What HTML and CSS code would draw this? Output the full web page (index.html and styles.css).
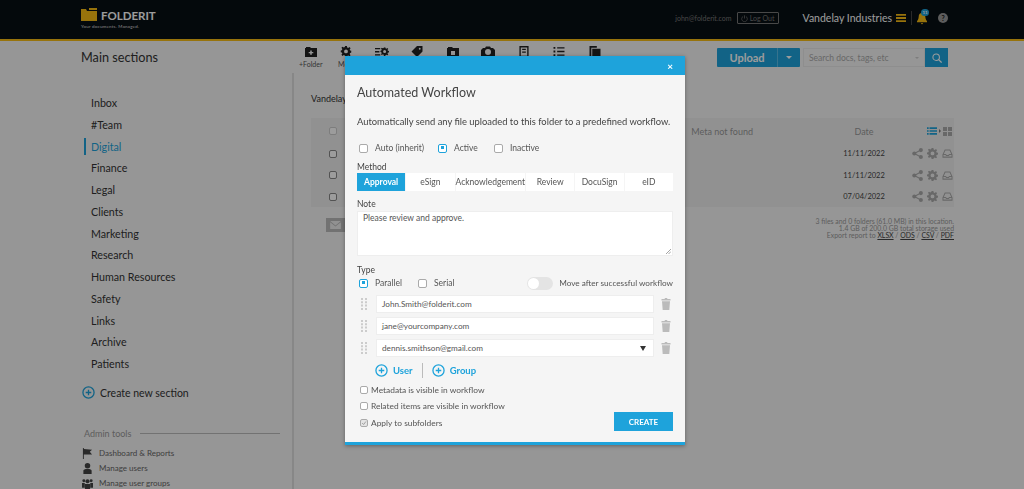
FILE: index.html
```html
<!DOCTYPE html>
<html>
<head>
    <meta charset="utf-8" />
    <title>Automated Workflow</title>
    <meta name="viewport" content="width=device-width, initial-scale=1">
    <link rel="stylesheet" href="styles.css">
</head>
<body>
    <svg class="defs" width="0" height="0">
        <symbol id="i-share" viewBox="0 0 12 12"><circle cx="2.5" cy="6" r="2.2"/><circle cx="9.7" cy="2.3" r="2.2"/><circle cx="9.7" cy="9.7" r="2.2"/><path d="M2.5 6 9.7 2.3M2.5 6l7.2 3.7" stroke="#aaa" stroke-width="1.2" fill="none"/></symbol>
        <symbol id="i-gear" viewBox="0 0 12 12"><path fill-rule="evenodd" d="M5 0h2l.3 1.600 1.100.5L9.800 1.200l1.200 1.200-1 1.300.5 1.200 1.500.3v2l-1.500.3-.5 1.200 1 1.300-1.200 1.200-1.400-.9-1.100.5L7 12H5l-.3-1.600-1.100-.5-1.400.9L1 9.600l1-1.300-.5-1.200L0 6.800v-2l1.500-.3.5-1.200-1-1.300 1.200-1.200 1.400.9 1.100-.5zM6 3.800a2 2 0 1 0 0 4.200 2 2 0 0 0 0-4.200z"/></symbol>
        <symbol id="i-tray" viewBox="0 0 12 12"><path d="M3 1.500h6L11.500 7v3.500H.5V7zM3.700 2.600 2 6.600h2.400l.6 1h2l.6-1H10L8.300 2.600zM1.600 7.700v1.700h8.800V7.700H8.200l-.6 1H4.400l-.6-1z" fill-rule="evenodd"/></symbol>
        <symbol id="i-plus" viewBox="0 0 14 14"><circle cx="7" cy="7" r="6" fill="none" stroke="currentColor" stroke-width="1.4"/><path d="M7 4v6M4 7h6" stroke="currentColor" stroke-width="1.4"/></symbol>
        <symbol id="i-trash" viewBox="0 0 10 12"><path d="M4 0h2l.5 1h3v1.400H.5V1h3zM1 3.200h8L8.300 12H1.700z"/></symbol>
        <symbol id="i-grip" viewBox="0 0 6 12"><path d="M0 0h2v2H0zM4 0h2v2H4zM0 3.300h2v2H0zM4 3.300h2v2H4zM0 6.600h2v2H0zM4 6.600h2v2H4zM0 10h2v2H0zM4 10h2v2H4z"/></symbol>
    </svg>

    <div class="page">
        <header class="topbar">
            <div class="brand">
                <div class="brand-row">
                    <svg class="brand-logo" viewBox="0 0 16 13"><path d="M0 1h5l1 2h10v10H0zM8 0h8v2H8z"/></svg>
                    <span class="brand-name">FOLDERIT</span>
                </div>
                <div class="brand-tag">Your documents. Managed.</div>
            </div>
            <div class="account">
                <span class="account-mail">john@folderit.com</span>
                <span class="logout">
                    <svg viewBox="0 0 10 10"><path d="M3 2a4 4 0 1 0 4 0M5 .5V5" fill="none" stroke="currentColor" stroke-width="1"/></svg>
                    Log Out
                </span>
                <span class="company">Vandelay Industries</span>
                <svg class="burger" viewBox="0 0 10 8"><path d="M0 0h10v1.800H0zM0 3.100h10v1.800H0zM0 6.200h10V8H0z"/></svg>
                <span class="top-sep"></span>
                <span class="bell">
                    <svg viewBox="0 0 10 12"><path d="M5 .5c2.300 0 3.300 1.700 3.300 3.800 0 2.500 1.700 4.400 1.700 4.400v1H0v-1s1.700-1.900 1.700-4.400C1.700 2.200 2.700.5 5 .5zM3.800 10.500h2.400L5 12z"/></svg>
                    <span class="bell-count">11</span>
                </span>
                <span class="help">?</span>
            </div>
        </header>

        <div class="toolbar">
            <h1 class="section-title">Main sections</h1>
            <div class="tools">
                <div class="tool">
                    <svg viewBox="0 0 12 11"><path fill-rule="evenodd" d="M0 2h1V1h4l1 1h6v9H0zM5.200 4.500V6H3.700v1.300h1.500v1.500h1.600V7.300h1.500V6H6.800V4.500z"/></svg>
                    <span>+Folder</span>
                </div>
                <div class="tool"><svg viewBox="0 0 12 12"><use href="#i-gear"/></svg><span>More</span></div>
                <div class="tool">
                    <svg viewBox="0 0 16 12"><path d="M0 2h6v1.500H0zM0 5.500h5V7H0zM0 9h6v1.500H0z"/><use href="#i-gear" x="6" y="1" width="10" height="10"/></svg>
                </div>
                <div class="tool"><svg viewBox="0 0 12 12"><path fill-rule="evenodd" d="M6 0h6v6l-6 6-6-6zM9 2a1 1 0 1 0 0 2 1 1 0 0 0 0-2z"/></svg></div>
                <div class="tool"><svg viewBox="0 0 12 11"><path fill-rule="evenodd" d="M0 2h1V1h4l1 1h6v9H0zM4 5v4h4V5z"/></svg></div>
                <div class="tool"><svg viewBox="0 0 14 11"><path fill-rule="evenodd" d="M2 2h2l1-1.500h4L10 2h2l2 2v7H0V4zM7 3a3 3 0 1 0 0 6 3 3 0 0 0 0-6z"/></svg></div>
                <div class="tool"><svg viewBox="0 0 10 12"><path fill-rule="evenodd" d="M0 0h10v12H0zM1.500 1.500v9h7v-9zM3 3h4v1.300H3zM3 6h4v1.300H3z"/></svg></div>
                <div class="tool"><svg viewBox="0 0 12 12"><path d="M0 1h2v2H0zM4 1.300h8v1.400H4zM0 5h2v2H0zM4 5.300h8v1.400H4zM0 9h2v2H0zM4 9.300h8v1.400H4z"/></svg></div>
                <div class="tool"><svg viewBox="0 0 12 12"><path d="M0 0h8v2H2v10H0zM3 3h9v9H3z"/></svg></div>
            </div>
            <div class="actions">
                <div class="upload">
                    <span class="upload-main">Upload</span>
                    <span class="upload-drop"><i></i></span>
                </div>
                <div class="search">
                    <span class="search-text">Search docs, tags, etc</span>
                    <i class="search-caret"></i>
                </div>
                <span class="search-btn">
                    <svg viewBox="0 0 12 12"><circle cx="5" cy="5" r="3.900" fill="none" stroke="currentColor" stroke-width="1.300"/><path d="m8 8 3.500 3.500" stroke="currentColor" stroke-width="1.500"/></svg>
                </span>
            </div>
        </div>

        <div class="content">
            <aside class="sidebar">
                <ul class="sections">
                    <li>Inbox</li>
                    <li>#Team</li>
                    <li class="active">Digital</li>
                    <li>Finance</li>
                    <li>Legal</li>
                    <li>Clients</li>
                    <li>Marketing</li>
                    <li>Research</li>
                    <li>Human Resources</li>
                    <li>Safety</li>
                    <li>Links</li>
                    <li>Archive</li>
                    <li>Patients</li>
                </ul>
                <div class="create-section">
                    <svg viewBox="0 0 14 14"><use href="#i-plus"/></svg>
                    <span>Create new section</span>
                </div>
                <div class="admin-head">
                    <span>Admin tools</span>
                    <i></i>
                </div>
                <ul class="admin-list">
                    <li>
                        <svg viewBox="0 0 12 12"><path d="M1 0h1v1l9 1-2.500 2L11 7H2v5H1z"/></svg>
                        Dashboard &amp; Reports
                    </li>
                    <li>
                        <svg viewBox="0 0 12 12"><circle cx="6" cy="3" r="3"/><path d="M1.500 12V8.500C1.500 7 3 6.500 6 6.500s4.500.5 4.500 2V12z"/></svg>
                        Manage users
                    </li>
                    <li>
                        <svg viewBox="0 0 12 12"><circle cx="6" cy="3.500" r="2.200"/><circle cx="2" cy="3" r="1.600"/><circle cx="10" cy="3" r="1.600"/><path d="M0 5.500h3v5H0zM9 5.500h3v5H9zM3.200 6.500h5.600V12H3.200z"/></svg>
                        Manage user groups
                    </li>
                </ul>
            </aside>

            <main class="main">
                <div class="crumb">Vandelay</div>
                <div class="filelist">
                    <div class="file-row file-head">
                        <span class="check checked"></span>
                        <span class="file-meta">Meta not found</span>
                        <span class="file-date">Date</span>
                        <span class="view-switch">
                            <svg class="view-list" viewBox="0 0 12 9"><path d="M0 0h2v2H0zM3 0h9v2H3zM0 3.500h2v2H0zM3 3.500h9v2H3zM0 7h2v2H0zM3 7h9v2H3z"/></svg>
                            <i></i>
                            <svg class="view-grid" viewBox="0 0 9 9"><path d="M0 0h4v4H0zM5 0h4v4H5zM0 5h4v4H0zM5 5h4v4H5z"/></svg>
                        </span>
                    </div>
                    <div class="file-row">
                        <span class="check"></span>
                        <span class="file-meta"></span>
                        <span class="file-date">11/11/2022</span>
                        <span class="file-icons"><svg><use href="#i-share"/></svg><svg><use href="#i-gear"/></svg><svg><use href="#i-tray"/></svg></span>
                    </div>
                    <div class="file-row">
                        <span class="check"></span>
                        <span class="file-meta"></span>
                        <span class="file-date">11/11/2022</span>
                        <span class="file-icons"><svg><use href="#i-share"/></svg><svg><use href="#i-gear"/></svg><svg><use href="#i-tray"/></svg></span>
                    </div>
                    <div class="file-row">
                        <span class="check"></span>
                        <span class="file-meta"></span>
                        <span class="file-date">07/04/2022</span>
                        <span class="file-icons"><svg><use href="#i-share"/></svg><svg><use href="#i-gear"/></svg><svg><use href="#i-tray"/></svg></span>
                    </div>
                </div>
                <div class="file-foot">
                    <span class="mail-btn">
                        <svg viewBox="0 0 12 9"><path d="M0 0h12L6 5zM0 1.500l6 4.800 6-4.800V9H0z"/></svg>
                    </span>
                    <div class="file-stats">
                        3 files and 0 folders (61.0 MB) in this location.<br>
                        1.4 GB of 200.0 GB total storage used<br>
                        Export report to <u>XLSX</u> / <u>ODS</u> / <u>CSV</u> / <u>PDF</u>
                    </div>
                </div>
            </main>
        </div>
    </div>

    <div class="overlay"></div>

    <div class="modal">
        <div class="modal-head"><span class="modal-close">×</span></div>
        <div class="modal-body">
            <h2 class="modal-title">Automated Workflow</h2>
            <p class="modal-desc">Automatically send any file uploaded to this folder to a predefined workflow.</p>

            <div class="state-row">
                <label class="opt opt-auto"><span class="box"></span>Auto (inherit)</label>
                <label class="opt opt-active"><span class="box on"></span>Active</label>
                <label class="opt"><span class="box"></span>Inactive</label>
            </div>

            <div class="field-label label-method">Method</div>
            <div class="tabs">
                <span class="tab selected">Approval</span>
                <span class="tab">eSign</span>
                <span class="tab">Acknowledgement</span>
                <span class="tab">Review</span>
                <span class="tab">DocuSign</span>
                <span class="tab">eID</span>
            </div>

            <div class="field-label label-note">Note</div>
            <div class="note">
                Please review and approve.
                <svg class="resize" viewBox="0 0 6 6"><path d="M0 6 6 0M3 6l3-3" stroke="#777" stroke-width=".8"/></svg>
            </div>

            <div class="field-label label-type">Type</div>
            <div class="type-row">
                <label class="opt opt-parallel"><span class="box on"></span>Parallel</label>
                <label class="opt"><span class="box"></span>Serial</label>
                <span class="toggle"><i></i></span>
                <span class="toggle-text">Move after successful workflow</span>
            </div>

            <div class="recipients">
                <div class="recipient">
                    <svg class="grip"><use href="#i-grip"/></svg>
                    <div class="recipient-input">John.Smith@folderit.com</div>
                    <svg class="trash"><use href="#i-trash"/></svg>
                </div>
                <div class="recipient">
                    <svg class="grip"><use href="#i-grip"/></svg>
                    <div class="recipient-input">jane@yourcompany.com</div>
                    <svg class="trash"><use href="#i-trash"/></svg>
                </div>
                <div class="recipient">
                    <svg class="grip"><use href="#i-grip"/></svg>
                    <div class="recipient-input">dennis.smithson@gmail.com<i class="select-caret"></i></div>
                    <svg class="trash"><use href="#i-trash"/></svg>
                </div>
            </div>

            <div class="add-row">
                <span class="add-link"><svg viewBox="0 0 14 14"><use href="#i-plus"/></svg>User</span>
                <i class="add-sep"></i>
                <span class="add-link"><svg viewBox="0 0 14 14"><use href="#i-plus"/></svg>Group</span>
            </div>

            <div class="modal-foot">
                <div class="checks">
                    <label class="chk"><span class="chk-box"></span>Metadata is visible in workflow</label>
                    <label class="chk"><span class="chk-box"></span>Related items are visible in workflow</label>
                    <label class="chk"><span class="chk-box ticked"><svg viewBox="0 0 8 8"><path d="m1.500 4 2 2 3-4" fill="none" stroke="#888" stroke-width="1"/></svg></span>Apply to subfolders</label>
                </div>
                <button class="create-btn">CREATE</button>
            </div>
        </div>
    </div>
</body>
</html>
```

FILE: styles.css
```css
* {
    margin: 0;
    padding: 0;
    box-sizing: border-box;
}
html, body {
    height: 100%;
    overflow: hidden;
}
body {
    background: #f5f5f5;
    font-family: Lato, "Liberation Sans", sans-serif;
    color: #444;
}
ul {
    list-style: none;
}
.defs {
    display: block;
    height: 0;
}

/* top bar */
.page {
    height: 489px;
    overflow: hidden;
}
.topbar {
    height: 41px;
    background: #080f14;
    border-bottom: 2px solid #f7bd14;
    display: flex;
    align-items: flex-start;
    padding: 8px 76px 0 81px;
}
.brand-row {
    display: flex;
    align-items: center;
    height: 13px;
}
.brand-logo {
    width: 16px;
    height: 13px;
    fill: #f7bd14;
}
.brand-name {
    margin-left: 4px;
    font-size: 11.5px;
    font-weight: 700;
    color: #fff;
    line-height: 13px;
    position: relative;
    top: 1px;
}
.brand-tag {
    font-size: 4.5px;
    color: #ddd;
    margin-top: 3px;
    letter-spacing: .2px;
}
.account {
    margin-left: auto;
    display: flex;
    align-items: center;
    height: 20px;
    color: #fff;
}
.account-mail {
    font-size: 7px;
    color: #777;
}
.logout {
    margin-left: 5px;
    width: 42px;
    height: 12px;
    border: 1px solid #777;
    border-radius: 1px;
    color: #777;
    font-size: 7px;
    display: flex;
    align-items: center;
    justify-content: center;
    gap: 2px;
}
.logout svg {
    width: 7px;
    height: 7px;
}
.company {
    margin-left: 24px;
    font-size: 10.5px;
    color: #fff;
}
.burger {
    width: 10px;
    height: 8px;
    margin-left: 4px;
    fill: #f7bd14;
}
.top-sep {
    width: 1px;
    height: 14px;
    background: #444;
    margin-left: 5px;
}
.bell {
    position: relative;
    margin-left: 5px;
    width: 11px;
    height: 13px;
}
.bell svg {
    display: block;
    width: 10px;
    height: 13px;
    fill: #f7bd14;
}
.bell-count {
    position: absolute;
    top: -3px;
    left: 4px;
    width: 8px;
    height: 7px;
    border-radius: 4px;
    background: #1ea3db;
    color: #fff;
    font-size: 4.5px;
    font-weight: 700;
    line-height: 7px;
    text-align: center;
}
.help {
    margin-left: 10px;
    width: 10px;
    height: 10px;
    border-radius: 50%;
    background: #999;
    color: #111;
    font-size: 7px;
    font-weight: 700;
    line-height: 10px;
    text-align: center;
}

/* toolbar */
.toolbar {
    height: 32px;
    display: flex;
    padding: 0 76px 0 81px;
}
.section-title {
    width: 212px;
    font-size: 12.7px;
    font-weight: 400;
    line-height: 33px;
    color: #333;
}
.tools {
    display: flex;
    padding-top: 5px;
}
.tool {
    width: 35.5px;
    display: flex;
    flex-direction: column;
    align-items: center;
    font-size: 7px;
    color: #555;
}
.tool svg {
    height: 11px;
    width: 14px;
    fill: #222;
    color: #222;
    margin-bottom: 3px;
}
.actions {
    margin-left: auto;
    display: flex;
    padding-top: 7px;
    height: 26px;
}
.upload {
    display: flex;
    width: 83px;
    height: 19px;
    border-radius: 1px;
    overflow: hidden;
    color: #fff;
}
.upload-main {
    width: 61px;
    background: #1ea3db;
    border-right: 1px solid #5bbde6;
    font-size: 11px;
    font-weight: 700;
    line-height: 19px;
    text-align: center;
}
.upload-drop {
    flex: 1;
    background: #1ea3db;
    display: flex;
    align-items: center;
    justify-content: center;
}
.upload-drop i {
    border: 3px solid transparent;
    border-top-color: #fff;
    margin-top: 3px;
}
.search {
    margin-left: 3px;
    width: 122px;
    height: 19px;
    background: #f5f5f5;
    border: 1px solid #e8e8e8;
    display: flex;
    align-items: center;
    padding: 0 5px;
    font-size: 8.5px;
    color: #aaa;
}
.search-caret {
    margin-left: auto;
    margin-top: 3px;
    border: 2.5px solid transparent;
    border-top-color: #ccc;
}
.search-btn {
    width: 23px;
    height: 19px;
    background: #1ea3db;
    color: #fff;
    display: flex;
    align-items: center;
    justify-content: center;
}
.search-btn svg {
    width: 10px;
    height: 10px;
}

/* sidebar */
.content {
    display: flex;
    height: 416px;
}
.sidebar {
    width: 294px;
    border-right: 2px solid #ddd;
    padding: 19px 12px 0 84px;
}
.sections li {
    height: 21.75px;
    line-height: 21.75px;
    font-size: 10.7px;
    padding-left: 7px;
    color: #333;
    position: relative;
}
.sections li.active {
    color: #1ea3db;
}
.sections li.active::before {
    content: "";
    position: absolute;
    left: 0;
    top: 2px;
    bottom: 2px;
    width: 2px;
    background: #1ea3db;
}
.create-section {
    display: flex;
    align-items: center;
    margin: 10px 0 0 -2px;
    height: 16px;
    font-size: 10.5px;
    color: #333;
}
.create-section svg {
    width: 13px;
    height: 13px;
    color: #1ea3db;
    margin-right: 5px;
}
.admin-head {
    display: flex;
    align-items: center;
    margin-top: 27px;
    height: 12px;
    font-size: 9px;
    color: #999;
}
.admin-head i {
    flex: 1;
    height: 1px;
    background: #bbb;
    margin-left: 9px;
}
.admin-list {
    margin-top: 6px;
    margin-left: -2px;
}
.admin-list li {
    display: flex;
    align-items: center;
    height: 15px;
    font-size: 8px;
    color: #666;
}
.admin-list svg {
    width: 11px;
    height: 11px;
    fill: #444;
    margin-right: 6px;
}

/* file list behind the dialog */
.main {
    flex: 1;
    padding: 19px 70px 0 17px;
}
.crumb {
    font-size: 9px;
    line-height: 13px;
    color: #333;
    white-space: nowrap;
}
.filelist {
    margin-top: 13px;
    background: #eee;
    height: 89px;
    padding-top: 1.5px;
}
.file-row {
    display: flex;
    align-items: center;
    height: 21.5px;
    padding-left: 18px;
    font-size: 7.5px;
    color: #444;
}
.file-head {
    height: 23.5px;
    color: #999;
    font-size: 9px;
}
.check {
    width: 8px;
    height: 8px;
    border: 1px solid #888;
    border-radius: 2px;
    background: #fff;
}
.check.checked {
    border-color: #ccc;
}
.file-meta {
    width: 416px;
    flex: none;
    text-align: right;
    white-space: nowrap;
}
.file-date {
    width: 60px;
    margin-left: 81px;
    text-align: center;
    white-space: nowrap;
}
.file-icons {
    display: flex;
    gap: 4px;
    margin-left: 18px;
}
.file-icons svg {
    width: 11px;
    height: 11px;
    fill: #aaa;
}
.view-switch {
    display: flex;
    align-items: center;
    margin-left: 33px;
}
.view-list {
    width: 10px;
    height: 8px;
    fill: #1ea3db;
}
.view-switch i {
    border: 2px solid transparent;
    border-left-color: #777;
    margin-left: 2px;
}
.view-grid {
    width: 9px;
    height: 9px;
    fill: #aaa;
}
.file-foot {
    display: flex;
    justify-content: space-between;
    margin-top: 11px;
    padding-left: 15px;
}
.mail-btn {
    width: 19px;
    height: 14px;
    background: #bbb;
    display: flex;
    align-items: center;
    justify-content: center;
}
.mail-btn svg {
    width: 11px;
    height: 8px;
    fill: #eee;
}
.file-stats {
    text-align: right;
    font-size: 6.9px;
    line-height: 7px;
    color: #999;
}
.file-stats u {
    color: #444;
}

/* dimmer */
.overlay {
    position: fixed;
    left: 0;
    top: 0;
    right: 0;
    bottom: 0;
    background: rgba(0, 0, 0, .39);
}

/* dialog */
.modal {
    position: absolute;
    left: 345px;
    top: 56px;
    width: 340px;
    height: 389px;
    background: #f5f5f5;
    border-bottom: 3px solid #1ea3db;
    box-shadow: 0 1px 4px rgba(0, 0, 0, .35);
}
.modal-head {
    height: 19px;
    background: #1ea3db;
    display: flex;
    align-items: center;
    justify-content: flex-end;
    padding-right: 12px;
}
.modal-close {
    color: #fff;
    font-size: 10px;
    font-weight: 700;
    line-height: 10px;
}
.modal-body {
    padding: 8px 12px 0;
}
.modal-title {
    height: 20px;
    font-size: 12.5px;
    font-weight: 400;
    line-height: 20px;
    color: #444;
}
.modal-desc {
    margin-top: 12px;
    height: 14px;
    font-size: 9.4px;
    line-height: 14px;
    color: #444;
    white-space: nowrap;
}
.state-row {
    margin-top: 12px;
    height: 14px;
    display: flex;
    padding-left: 2px;
}
.opt {
    display: flex;
    align-items: center;
    font-size: 8.5px;
    color: #555;
}
.opt-auto {
    width: 79px;
}
.opt-active {
    width: 56px;
}
.opt-parallel {
    width: 59px;
}
.box {
    width: 9px;
    height: 9px;
    border: 1px solid #aaa;
    border-radius: 2px;
    background: #fff;
    margin-right: 7px;
}
.box.on {
    border: 1.5px solid #1ea3db;
    position: relative;
}
.box.on::after {
    content: "";
    position: absolute;
    left: 1.5px;
    top: 1.5px;
    width: 3px;
    height: 3px;
    background: #1ea3db;
}
.field-label {
    height: 12px;
    font-size: 8.5px;
    line-height: 12px;
    color: #444;
}
.label-method {
    margin-top: 6px;
}
.label-note {
    margin-top: 7px;
}
.label-type {
    margin-top: 8px;
}
.tabs {
    display: flex;
    gap: 1px;
    height: 18px;
}
.tab {
    flex: 1 1 0;
    background: #fff;
    font-size: 8.5px;
    line-height: 18px;
    text-align: center;
    color: #555;
    white-space: nowrap;
}
.tab.selected {
    background: #1ea3db;
    color: #fff;
    font-weight: 700;
}
.note {
    margin-top: 1px;
    height: 45px;
    background: #fff;
    border: 1px solid #eee;
    padding: 1px 5px;
    font-size: 8.5px;
    line-height: 11px;
    color: #555;
    position: relative;
}
.resize {
    position: absolute;
    right: 1px;
    bottom: 1px;
    width: 5px;
    height: 5px;
}
.type-row {
    height: 14px;
    display: flex;
    align-items: center;
    padding-left: 2px;
}
.toggle {
    margin-left: auto;
    width: 26px;
    height: 13px;
    border-radius: 7px;
    background: #e4e4e4;
    padding: 1px;
}
.toggle i {
    display: block;
    width: 11px;
    height: 11px;
    border-radius: 50%;
    background: #fff;
}
.toggle-text {
    margin-left: 6px;
    font-size: 8.2px;
    color: #555;
    white-space: nowrap;
}
.recipients {
    margin-top: 5px;
    display: flex;
    flex-direction: column;
    gap: 4px;
}
.recipient {
    display: flex;
    align-items: center;
    height: 18px;
}
.grip {
    width: 6px;
    height: 12px;
    margin: 0 9px 0 4px;
    fill: #ccc;
}
.recipient-input {
    flex: 1;
    height: 18px;
    background: #fff;
    border: 1px solid #eee;
    padding-left: 5px;
    font-size: 8.2px;
    color: #555;
    display: flex;
    align-items: center;
}
.select-caret {
    margin-left: auto;
    margin-right: 7px;
    border: 3px solid transparent;
    border-top: 5px solid #333;
    border-bottom: 0;
}
.trash {
    width: 10px;
    height: 12px;
    margin-left: 7px;
    margin-right: 2px;
    fill: #bbb;
}
.add-row {
    margin-top: 3px;
    height: 20px;
    display: flex;
    align-items: center;
    padding-left: 18px;
}
.add-link {
    display: flex;
    align-items: center;
    font-size: 9.5px;
    font-weight: 700;
    color: #1ea3db;
}
.add-link svg {
    width: 13px;
    height: 13px;
    margin-right: 5px;
}
.add-sep {
    width: 1px;
    height: 15px;
    background: #bbb;
    margin: 0 9px;
}
.modal-foot {
    display: flex;
    justify-content: space-between;
    align-items: flex-end;
    margin-top: 1.5px;
}
.checks {
    padding-left: 3px;
}
.chk {
    display: flex;
    align-items: center;
    height: 16.5px;
    font-size: 8.4px;
    color: #555;
    white-space: nowrap;
}
.chk-box {
    width: 8px;
    height: 8px;
    border: 1px solid #aaa;
    border-radius: 2px;
    background: #fff;
    margin-right: 3px;
}
.chk-box.ticked {
    background: #e4e4e4;
}
.chk-box svg {
    display: block;
    width: 6px;
    height: 6px;
}
.create-btn {
    width: 59px;
    height: 19px;
    border: 0;
    background: #1ea3db;
    color: #fff;
    font-family: inherit;
    font-size: 8px;
    font-weight: 700;
}
```
